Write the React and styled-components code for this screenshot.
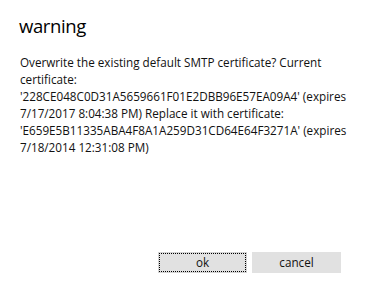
import React from "react";
import styled, { createGlobalStyle } from "styled-components";

const GlobalStyle = createGlobalStyle`
  html, body {
    margin: 0;
    padding: 0;
    background: #ffffff;
  }
  body {
    font-family: "Segoe UI", "Open Sans", "Liberation Sans", sans-serif;
  }
`;

const Dialog = styled.div`
  width: 386px;
  height: 303px;
  box-sizing: border-box;
  padding: 14px 20px 0 20px;
  display: flex;
  flex-direction: column;
  background: #fff;
`;

const Title = styled.h1`
  margin: 0 0 0 -1px;
  font-size: 18.5px;
  font-weight: 400;
  letter-spacing: -0.4px;
  line-height: 24px;
  color: #000;
`;

const Message = styled.p`
  margin: 16px 0 0 0;
  font-size: 11.7px;
  line-height: 17px;
  color: #111;
  flex: 1;
`;

const Line = styled.span`
  display: block;
  white-space: nowrap;
`;

const Buttons = styled.div`
  display: flex;
  justify-content: flex-end;
  gap: 5px;
  padding: 0 25px 30px 0;
`;

const Button = styled.button`
  width: 89px;
  height: 21px;
  box-sizing: border-box;
  background: #e1e1e1;
  border: 1px solid ${(p) => (p.$focused ? "#d4d4d4" : "#e1e1e1")};
  outline: ${(p) => (p.$focused ? "1px dotted #000" : "none")};
  outline-offset: -2px;
  font-family: inherit;
  font-size: 11.7px;
  color: #111;
  padding: 0 0 2px 0;
  cursor: pointer;
`;

const lines = [
  "Overwrite the existing default SMTP certificate? Current",
  "certificate:",
  "'228CE048C0D31A5659661F01E2DBB96E57EA09A4' (expires",
  "7/17/2017 8:04:38 PM) Replace it with certificate:",
  "'E659E5B11335ABA4F8A1A259D31CD64E64F3271A' (expires",
  "7/18/2014 12:31:08 PM)",
];

export default function App() {
  return (
    <>
      <GlobalStyle />
      <Dialog>
        <Title>warning</Title>
        <Message>
          {lines.map((l) => (
            <Line key={l}>{l}</Line>
          ))}
        </Message>
        <Buttons>
          <Button $focused>ok</Button>
          <Button>cancel</Button>
        </Buttons>
      </Dialog>
    </>
  );
}
